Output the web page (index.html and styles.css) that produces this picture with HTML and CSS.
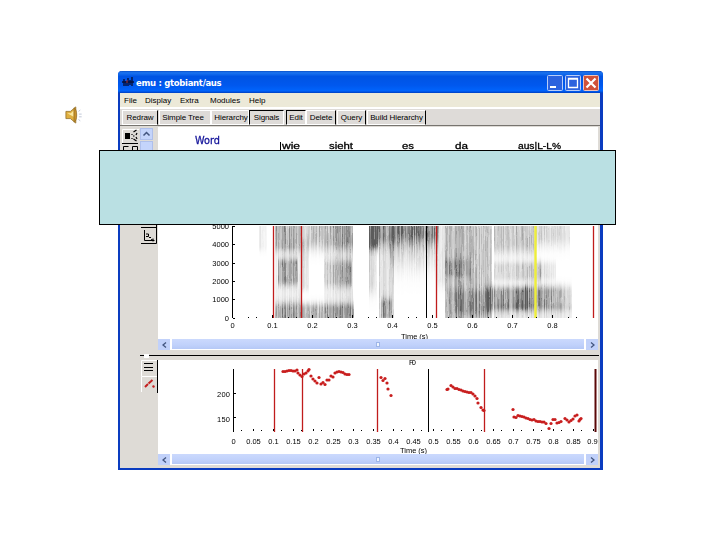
FILE: index.html
```
<!DOCTYPE html>
<html lang="en">
<head>
    <meta charset="UTF-8">
    <title>emu : gtobiant/aus</title>
    <link rel="stylesheet" href="styles.css">
</head>
<body>
    <div class="slide">
        <svg class="speaker" width="18" height="18" viewBox="0 0 20 20">
            <path d="M1 6h5l6-5v18l-6-5H1z" fill="#e0b040" stroke="#8a641c" stroke-width=".8"/>
            <path d="M2.500 8h4l3-3v7z" fill="#fbe8a0"/>
            <path d="M10 2c4 1 4 15 0 16z" fill="#c8922c" stroke="#8a641c" stroke-width=".7"/>
            <path d="M15 6l2-1.500M15.500 9h3M15.500 12h3M15 15l2 1.500" stroke="#a9b2c8" stroke-width=".8"/>
        </svg>

        <div class="window">
            <div class="titlebar">
                <svg class="app-icon" width="12" height="12" viewBox="0 0 12 12">
                    <path d="M0 6h12M2 3v7M4 5v5M6 2v8M8 4v5M10 1v9" stroke="#05103c" stroke-width="1.4"/>
                    <path d="M5 4v3" stroke="#a33"/>
                </svg>
                <span class="title">emu : gtobiant/aus</span>
                <div class="controls">
                    <svg width="16" height="16" viewBox="0 0 16 16"><rect x=".5" y=".5" width="15" height="15" rx="1" fill="#2c62de" stroke="#b9cdf8"/><path d="M3 12h6" stroke="#fff" stroke-width="2"/></svg>
                    <svg width="16" height="16" viewBox="0 0 16 16"><rect x=".5" y=".5" width="15" height="15" rx="1" fill="#2c62de" stroke="#b9cdf8"/><path d="M3.500 4h9v8.500h-9zM3 3.500h10" stroke="#fff" stroke-width="1.300" fill="none"/></svg>
                    <svg width="16" height="16" viewBox="0 0 16 16"><rect x=".5" y=".5" width="15" height="15" rx="1" fill="#d0523a" stroke="#eec4bc"/><path d="M3.500 3.500l9 9M12.500 3.500l-9 9" stroke="#fff" stroke-width="2.200"/></svg>
                </div>
            </div>

            <div class="menubar">
                <span class="m-file">File</span>
                <span class="m-display">Display</span>
                <span class="m-extra">Extra</span>
                <span class="m-modules">Modules</span>
                <span class="m-help">Help</span>
            </div>

            <div class="toolbar">
                <span class="btn b-redraw">Redraw</span>
                <span class="btn b-tree">Simple Tree</span>
                <span class="btn b-hier">Hierarchy</span>
                <span class="btn b-signals pressed">Signals</span>
                <span class="btn b-edit pressed">Edit</span>
                <span class="btn b-delete">Delete</span>
                <span class="btn b-query">Query</span>
                <span class="btn b-build">Build Hierarchy</span>
            </div>

            <div class="pane pane-top">
                <svg class="tools" width="37" height="224" viewBox="121 127 37 224">
                    <path d="M122.500 144V129.500H139" stroke="#fff" fill="none"/>
                    <path d="M122 143.500h16" stroke="#000"/>
                    <rect x="125" y="133" width="5" height="6"/>
                    <path d="M132 134v1M132 138v1M133.500 132l3-2M133 136h1.500M136 135l1-2M133.500 139l3 2M136 137l1 2" stroke="#000" stroke-width="1.200"/>
                    <path d="M123.500 151v-4.500h5M132.500 151v-4.500h5v4" stroke="#000" fill="none"/>
                    <rect x="140.500" y="128.500" width="12" height="11" fill="#c4d4fb" stroke="#aebfeb"/>
                    <path d="M143.500 135.500l3-3 3 3" stroke="#42557f" stroke-width="1.500" fill="none"/>
                    <rect x="140.500" y="141.500" width="12" height="60" fill="#c4d4fb" stroke="#aebfeb"/>
                    <path d="M141 227.500h16M141 243.500h15.500V225" stroke="#000" fill="none"/>
                    <path d="M144.500 230v10.500h10M146 234h2.500v2.500H146M149 237.500h2M151 239.500l3 1M153 238.500v3" stroke="#000" fill="none"/>
                </svg>
                <div class="view">
                    <div class="plot">
                        <canvas id="spectrogram" width="440" height="212"></canvas>
                        <svg id="spec-axes" width="440" height="212" viewBox="158 127 440 212">
                            <text class="level" x="195" y="144" textLength="25" lengthAdjust="spacingAndGlyphs">Word</text>
                            <path d="M280.500 142v8" stroke="#000"/>
                            <g class="word">
                                <text x="282" y="149" textLength="18" lengthAdjust="spacingAndGlyphs">wie</text>
                                <text x="329" y="149" textLength="24" lengthAdjust="spacingAndGlyphs">sieht</text>
                                <text x="402" y="149" textLength="12" lengthAdjust="spacingAndGlyphs">es</text>
                                <text x="455" y="149" textLength="13" lengthAdjust="spacingAndGlyphs">da</text>
                                <text x="518" y="149" textLength="43" lengthAdjust="spacingAndGlyphs">aus|L-L%</text>
                            </g>
                            <path d="M273.500 226v92M301.500 226v92M436.500 226v92M593.500 226v92" stroke="#c01c1c" stroke-width="1.300"/>
                            <path d="M426.500 226v92" stroke="#000"/>
                            <path d="M535.500 226v92" stroke="#eeee3a" stroke-width="2.400"/>
                            <path d="M232.500 226v92" stroke="#000"/>
                            <text x="401" y="339" textLength="27">Time (s)</text>
                        </svg>
                    </div>
                    <div class="scrollbar">
                        <span class="arrow"><svg width="5" height="6"><path d="M4 .5L1 3l3 2.500" stroke="#42557f" stroke-width="1.300" fill="none"/></svg></span>
                        <span class="thumb"><i></i></span>
                        <span class="arrow"><svg width="5" height="6"><path d="M1 .5L4 3 1 5.500" stroke="#42557f" stroke-width="1.300" fill="none"/></svg></span>
                    </div>
                </div>
            </div>

            <div class="sash"><span class="handle"></span></div>

            <div class="pane pane-bottom">
                <svg class="tools" width="37" height="107" viewBox="121 360 37 107">
                    <path d="M141.500 376v-15.500H157M141.500 392v-15.500H157" stroke="#fff" fill="none"/>
                    <path d="M157.500 360v33" stroke="#000"/>
                    <path d="M144 363.500h9M144 367.500h9M144 370.500h9" stroke="#000"/>
                    <path d="M145 387l3-3M148.500 383.500l4-3.500M152.500 386l2 1" stroke="#c42020" stroke-width="2"/>
                </svg>
                <div class="view">
                    <div class="plot">
                        <svg id="pitch" width="440" height="94" viewBox="158 360 440 94">
                            <text x="409" y="365" textLength="7">F0</text>
                            <path d="M274.500 369v63M302.500 369v63M377.500 369v63M484.500 369v63" stroke="#c01c1c" stroke-width="1.300"/>
                            <path d="M233.500 369v63M428.500 369v63" stroke="#000"/>
                            <path d="M595.500 369v63" stroke="#5a0808" stroke-width="2"/>
                            <path d="M234 393.500h2M234 417.500h2" stroke="#000"/>
                            <text x="217" y="397" textLength="13">200</text>
                            <text x="217" y="422" textLength="13">150</text>
                            <text x="400" y="453" textLength="27">Time (s)</text>
                        </svg>
                    </div>
                    <div class="scrollbar">
                        <span class="arrow"><svg width="5" height="6"><path d="M4 .5L1 3l3 2.500" stroke="#42557f" stroke-width="1.300" fill="none"/></svg></span>
                        <span class="thumb"><i></i></span>
                        <span class="arrow"><svg width="5" height="6"><path d="M1 .5L4 3 1 5.500" stroke="#42557f" stroke-width="1.300" fill="none"/></svg></span>
                    </div>
                </div>
            </div>
        </div>

        <div class="cover"></div>
    </div>
    <script src="script.js"></script>
</body>
</html>
```

FILE: styles.css
```
body {
    margin: 0;
    background: #fff;
    font-family: "Liberation Sans", Arial, sans-serif;
    font-size: 8px;
    color: #000;
}

.slide {
    position: relative;
    width: 720px;
    height: 540px;
    overflow: hidden;
}

.speaker {
    position: absolute;
    left: 65px;
    top: 106px;
}

.window {
    position: absolute;
    left: 118px;
    top: 71px;
    width: 485px;
    height: 399px;
    box-sizing: border-box;
    display: flex;
    flex-direction: column;
    border: 3px solid #0a3cc0;
    border-top: none;
    border-left-width: 2px;
    border-bottom-width: 2px;
    border-radius: 4px 4px 0 0;
    background: #dedbd6;
}

.titlebar {
    height: 22px;
    flex: none;
    margin: 0 -3px 0 -2px;
    padding: 0 4px 0 4px;
    display: flex;
    align-items: center;
    background: linear-gradient(#0a50c8, #1b74f0 8%, #0054e3 25%, #0058ee 65%, #0064fc 90%, #003fc0);
    border-radius: 4px 4px 0 0;
}

.title {
    margin-left: 2px;
    padding-top: 2px;
    font: bold 8.5px "DejaVu Sans", sans-serif;
    letter-spacing: -0.3px;
    white-space: nowrap;
    color: #fff;
}

.controls {
    margin-left: auto;
    padding-top: 2px;
    display: flex;
    gap: 2px;
}

.menubar {
    height: 14px;
    flex: none;
    display: flex;
    align-items: center;
    padding-left: 4px;
    background: #ece9d8;
}

.menubar span {
    white-space: nowrap;
}

.m-file { width: 21px; }
.m-display { width: 35px; }
.m-extra { width: 30px; }
.m-modules { width: 39px; }

.toolbar {
    height: 19px;
    flex: none;
    box-sizing: border-box;
    display: flex;
    align-items: center;
    padding-left: 2px;
    border-top: 2px solid #fff;
    border-bottom: 1px solid #77746f;
    background: #dedbd8;
}

.btn {
    height: 15px;
    box-sizing: border-box;
    flex: none;
    line-height: 13px;
    text-align: center;
    white-space: nowrap;
    letter-spacing: -0.1px;
    border: 1px solid #fff;
    border-right-color: #000;
}

.pressed {
    border-color: #000 #fff #fff #000;
}

.b-redraw { width: 36px; margin-right: 1px; }
.b-tree { width: 52px; padding-right: 4px; border-right-color: #fff; }
.b-hier { width: 38px; padding-left: 2px; border-color: #fff; }
.b-signals { width: 35px; margin-right: 2px; }
.b-edit { width: 20px; }
.b-delete { width: 30px; margin-right: 1px; }
.b-query { width: 29px; margin-right: 1px; }
.b-build { width: 59px; }

.pane {
    display: flex;
    flex: none;
}

.pane-top {
    height: 224px;
    padding-left: 1px;
    padding-top: 1px;
}

.pane-bottom {
    height: 107px;
    padding-left: 1px;
}

.tools {
    flex: none;
}

.view {
    width: 440px;
}

.plot {
    display: grid;
    background: #fff;
}

.plot canvas,
.plot svg {
    grid-area: 1 / 1;
    display: block;
}

.plot text {
    font-size: 7.5px;
}

.plot .level {
    font: 10.5px "DejaVu Sans", sans-serif;
    fill: #14149a;
    stroke: #14149a;
    stroke-width: 0.3px;
}

.plot .word text {
    font: 9.5px "Liberation Sans", sans-serif;
    stroke: #000;
    stroke-width: 0.3px;
}

.scrollbar {
    height: 11px;
    display: flex;
    gap: 2px;
    background: #fff;
}

.arrow {
    width: 12px;
    display: flex;
    align-items: center;
    justify-content: center;
    background: #c1d1fa;
}

.thumb {
    flex: 1;
    display: flex;
    align-items: center;
    justify-content: center;
    margin-bottom: 1px;
    background: linear-gradient(#cbd9fd, #c0d1fb 60%, #b5c8f6);
}

.thumb i {
    width: 2px;
    height: 3px;
    border: 1px solid #9db5e8;
    background: #eef4fe;
}

.sash {
    height: 9px;
    flex: none;
    display: flex;
    align-items: center;
    margin-left: 20px;
    margin-right: 1px;
    background: linear-gradient(#000, #000) 0 4px / 100% 1px no-repeat;
}

.handle {
    width: 5px;
    height: 4px;
    margin-left: 4px;
    background: #fff;
}

.cover {
    position: absolute;
    left: 99px;
    top: 150px;
    width: 517px;
    height: 75px;
    box-sizing: border-box;
    border: 1px solid #000;
    background: #bae0e3;
}
```

FILE: script.js
```
const NS = "http://www.w3.org/2000/svg";

function add(parent, tag, attrs, text) {
    const el = document.createElementNS(NS, tag);
    for (const k in attrs) el.setAttribute(k, attrs[k]);
    if (text) el.textContent = text;
    parent.appendChild(el);
}

// axes of the spectrogram
const spec = document.getElementById("spec-axes");
for (let i = 0; i < 6; i++) {
    const y = 317.5 - i * 18.3;
    add(spec, "text", { x: 229, y: y + 3, "text-anchor": "end" }, String(i * 1000));
    add(spec, "path", { d: `M233 ${Math.round(y) + 0.5}h2`, stroke: "#000" });
}
for (let i = 0; i < 9; i++) {
    const x = 232.5 + i * 40;
    add(spec, "text", { x: x, y: 328, "text-anchor": "middle" }, i ? "0." + i : "0");
    add(spec, "path", { d: `M${x} 315v3M${x + 16} 317v1M${x + 24} 317v1`, stroke: "#000" });
}

// axes of the pitch track
const pitch = document.getElementById("pitch");
for (let i = 0; i < 19; i++) {
    const x = 233.5 + i * 20;
    const label = i === 18 ? x - 1 : x;
    add(pitch, "text", { x: label, y: 444, "text-anchor": "middle" }, String(i * 5 / 100));
    add(pitch, "path", { d: `M${x} 429v2M${x + 8} 430v1`, stroke: "#000" });
}

const points = [
    [283,371.500],[285,371.500],[287,371],[289,370.500],[291,370.500],[293,371],[295,371],[297,370],[298,373],[300,375],[302,376.500],[304,374],[306,373],[308,371],[309,369.500],
    [311,376],[313,379],[315,381],[317,383],[319,377.500],[321,384],[323,382.500],[325,384.500],[327,380],[329,380],[331,376],[333,377],[335,373],[337,372],[339,371.500],[341,372],[343,372.500],[345,374],[347,374.500],[349,374.500],
    [381,377.500],[383,380.500],[385,378.500],[387,383],[388,389],[391,395.500],
    [447,389.500],[448,389],[451,385.500],[453,387],[455,388.500],[457,388.500],[459,389.500],[461,390],[463,391],[465,391.500],[467,392],[469,392.500],[471,392.500],[473,394],[475,396],[477,398.500],[478,403],[481,407.500],[483,410],[484,410.500],
    [513,409.500],[514,417],[516,417.500],[518,415.500],[520,416],[522,416.500],[524,417],[526,418],[528,418.500],[530,419.500],[532,420],[534,419.500],[536,421],[538,421.500],[540,421.500],[542,422],[544,422],[546,423.500],[549,428.500],[551,423.500],[553,419.500],[555,419.500],[557,423],[559,422.500],[561,421.500],[565,418.500],[567,420],[569,422],[571,420.500],[573,419],[575,416],[577,415],[579,421],[580,419.500],[581,418.500]
];
points.forEach(([x, y]) => add(pitch, "circle", { cx: x, cy: y, r: 1.6, fill: "#c81e1e" }));

// spectrogram energy: [x0, x1, y0, y1, strength left, strength right, softness]
const bands = [
    [259, 266, 225, 245, 0.1, 0.04, 8],
    [275, 300, 222, 242, 0.45, 0.34, 12],
    [275, 300, 247, 318, 0.08, 0.1, 3],
    [278, 297, 264, 279, 0.38, 0.36, 9],
    [275, 300, 309, 319, 0.4, 0.35, 10],
    [302, 352, 223, 238, 0.2, 0.5, 16],
    [324, 352, 245, 318, 0.08, 0.14, 8],
    [324, 351, 266, 280, 0.14, 0.36, 10],
    [302, 308, 245, 285, 0.15, 0.1, 8],
    [302, 353, 309, 319, 0.34, 0.4, 9],
    [369, 377, 223, 242, 0.6, 0.65, 10],
    [378, 438, 220, 232, 0.6, 0.42, 18],
    [369, 376, 240, 280, 0.2, 0.1, 20],
    [379, 393, 240, 318, 0.18, 0.16, 8],
    [381, 391, 304, 314, 0.4, 0.3, 9],
    [390, 435, 235, 250, 0.2, 0.14, 28],
    [437, 444, 225, 275, 0.16, 0.12, 18],
    [445, 491, 222, 318, 0.38, 0.28, 5],
    [445, 470, 263, 272, 0.25, 0.12, 7],
    [447, 490, 295, 308, 0.12, 0.28, 10],
    [494, 535, 222, 242, 0.26, 0.32, 17],
    [536, 569, 222, 235, 0.22, 0.14, 16],
    [494, 540, 267, 275, 0.16, 0.3, 9],
    [540, 555, 267, 274, 0.16, 0.08, 9],
    [486, 525, 292, 304, 0.36, 0.66, 9],
    [525, 571, 292, 303, 0.66, 0.2, 10],
    [494, 571, 308, 318, 0.14, 0.1, 5]
];

let seed = 7;
function rnd() {
    seed = (seed * 16807) % 2147483647;
    return seed / 2147483647;
}

const ctx = document.getElementById("spectrogram").getContext("2d");
for (let x = 255; x < 572; x++) {
    const column = 0.6 + rnd() * 0.65;
    let grain = rnd();
    for (let y = 226; y < 318; y++) {
        if (rnd() < 0.2) grain = grain * 0.4 + rnd() * 0.6;
        let e = 0;
        for (const [x0, x1, y0, y1, a, b, s] of bands) {
            if (x < x0 || x > x1) continue;
            const d = Math.max(y0 - y, y - y1, 0) / s;
            e += (a + (b - a) * (x - x0) / (x1 - x0)) * Math.exp(-d * d * 2);
        }
        e = Math.min(0.8, e * column * (0.65 + grain * 0.7));
        ctx.fillStyle = `rgba(50,50,50,${e.toFixed(3)})`;
        ctx.fillRect(x - 158, y - 127, 1, 1);
    }
}
```
